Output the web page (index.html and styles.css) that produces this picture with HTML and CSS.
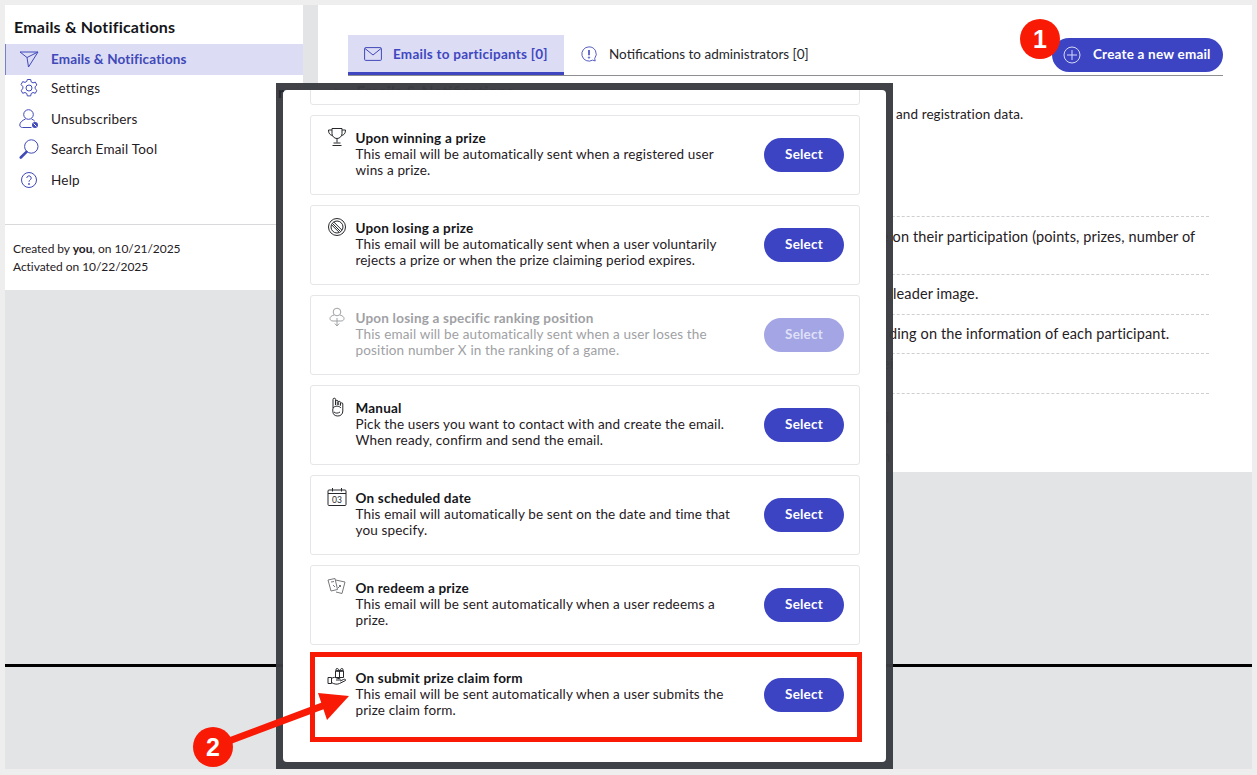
FILE: index.html
```html
<!DOCTYPE html>
<html lang="en">
<head>
<meta charset="utf-8">
<title>Emails &amp; Notifications</title>
<link rel="stylesheet" href="styles.css">
</head>
<body>
<div class="shell">
  <div class="top">
    <aside class="sidebar">
      <h2 class="side-title">Emails &amp; Notifications</h2>
      <nav class="nav">
        <a class="nav-item active"><svg class="nav-icon" viewBox="0 0 20 20"><path d="M1 3L19 3L9.500 18L8 8.500zM8 8.500L19 3"/></svg>Emails &amp; Notifications</a>
        <a class="nav-item"><svg class="nav-icon" viewBox="0 0 20 20"><circle cx="10" cy="10" r="3"/><path d="M8.300 1.500h3.400l.5 2.400 1.800 1 2.300-.8 1.600 2.900-1.800 1.700v2l1.800 1.700-1.600 2.900-2.300-.8-1.800 1-.5 2.400H8.300l-.5-2.400-1.800-1-2.300.8-1.600-2.900 1.800-1.700v-2L2.100 6.500l1.600-2.900 2.300.8 1.800-1z" stroke-linejoin="round"/></svg>Settings</a>
        <a class="nav-item"><svg class="nav-icon" viewBox="0 0 20 20"><circle cx="9.500" cy="5.500" r="4.800"/><path d="M6.500 10C3 11.500 .8 13.500 .8 16c0 1.500 1 2.500 2.700 2.500h9M12.500 10c1.500.6 2.500 1.300 3.300 2.300"/><circle cx="16" cy="16" r="3" fill="#4049b8" stroke="none"/><path d="M14.600 14.600l2.800 2.800" stroke="#fff"/></svg>Unsubscribers</a>
        <a class="nav-item"><svg class="nav-icon" viewBox="0 0 20 20"><circle cx="12.300" cy="7.500" r="6.700"/><path d="M7.500 12.800L1.800 18.500" stroke-width="2.600" stroke-linecap="round"/></svg>Search Email Tool</a>
        <a class="nav-item"><svg class="nav-icon" viewBox="0 0 20 20"><circle cx="10" cy="10" r="7.500"/><path d="M7.800 8a2.200 2.200 0 1 1 3.400 1.900c-.8.500-1.200 1-1.200 1.900"/><circle cx="10" cy="14" r=".6"/></svg>Help</a>
      </nav>
      <div class="side-foot">
        <p>Created by <b>you</b>, on 10/21/2025</p>
        <p>Activated on 10/22/2025</p>
      </div>
    </aside>
    <main class="main">
      <div class="tabs">
        <a class="tab tab-on"><svg class="tab-icon" viewBox="0 0 18 14"><rect x=".6" y=".6" width="16.800" height="12.800" rx="1"/><path d="M1 1.500L9 8l8-6.500"/></svg>Emails to participants [0]</a>
        <a class="tab"><svg class="tab-icon" viewBox="0 0 18 18"><path d="M9 1a8 8 0 1 0 4 14.900l3 .9-.6-2.800A8 8 0 0 0 9 1z"/><path d="M9 4.500v6" stroke-width="1.800"/><circle cx="9" cy="13" r=".8"/></svg>Notifications to administrators [0]</a>
        <button class="create"><svg class="create-icon" viewBox="0 0 18 18"><circle cx="9" cy="9" r="8"/><path d="M9 4v10M4 9h10"/></svg>Create a new email</button>
      </div>
      <h1 class="crumb-title"><span class="crumb-sep">&gt;</span>Emails &amp; Notifications</h1>
      <p class="lead">and registration data.</p>
      <div class="rows">
        <div class="row row-one">e on their participation (points, prizes, number of</div>
        <div class="row row-two">leader image.</div>
        <div class="row row-three">ding on the information of each participant.</div>
        <div class="row row-four">ei</div>
        <div class="row row-five">i</div>
        <div class="row-six">n</div>
      </div>
    </main>
  </div>
  <div class="rule"></div>
</div>

<div class="modal">
  <div class="modal-body">
  <div class="list">
    <div class="card"></div>
    <div class="card">
      <svg class="card-icon" viewBox="0 0 20 20"><path d="M5 1.500h10v5a5 5 0 0 1-10 0zM5 3H1.500c0 3.500 1.500 5 4 5.500M15 3h3.500c0 3.500-1.500 5-4 5.500M10 11.500v4M6.500 16h7M5.500 18.500h9"/></svg>
      <div class="card-text"><h3>Upon winning a prize</h3><p>This email will be automatically sent when a registered user<br>wins a prize.</p></div>
      <button class="select">Select</button>
    </div>
    <div class="card">
      <svg class="card-icon" viewBox="0 0 20 20"><circle cx="10" cy="10" r="8.500"/><circle cx="10" cy="10" r="6"/><path d="M5.500 6.500l8 8M6.800 5l8.200 8.200M4.800 8l7.200 7.200"/></svg>
      <div class="card-text"><h3>Upon losing a prize</h3><p>This email will be automatically sent when a user voluntarily<br>rejects a prize or when the prize claiming period expires.</p></div>
      <button class="select">Select</button>
    </div>
    <div class="card card-off">
      <svg class="card-icon" viewBox="0 0 20 20"><circle cx="10" cy="5" r="3.800"/><path d="M7 8C4 9 3 10 3 11.500S4 14 6 14h8c2 0 3-1 3-2.500S16 9 13 8M10 11v8M7.800 16.500L10 19l2.200-2.500"/></svg>
      <div class="card-text"><h3>Upon losing a specific ranking position</h3><p>This email will be automatically sent when a user loses the<br>position number X in the ranking of a game.</p></div>
      <button class="select select-off">Select</button>
    </div>
    <div class="card">
      <svg class="card-icon" viewBox="0 0 20 20"><path d="M6 12V2.500a1.300 1.300 0 0 1 2.600 0V8M8.600 8V4.500a1.200 1.200 0 0 1 2.400 0V8M11 8V5.500a1.200 1.200 0 0 1 2.400 0V8.500M13.400 8.500V7a1.200 1.200 0 0 1 2.400 0v7c0 3-2 5-5 5s-5-1.500-5-5V12M6 11c2-2.500 6-2.500 8 0M7 15c1.500 1.500 4 1.500 6 0"/></svg>
      <div class="card-text"><h3>Manual</h3><p>Pick the users you want to contact with and create the email.<br>When ready, confirm and send the email.</p></div>
      <button class="select">Select</button>
    </div>
    <div class="card">
      <svg class="card-icon" viewBox="0 0 20 20"><rect x="1" y="3" width="18" height="15.500" rx="1"/><path d="M1 6.500h18M5.500 1v3.500M14.500 1v3.500"/><text x="10" y="15.800" class="cal-num">03</text></svg>
      <div class="card-text"><h3>On scheduled date</h3><p>This email will automatically be sent on the date and time that<br>you specify.</p></div>
      <button class="select">Select</button>
    </div>
    <div class="card">
      <svg class="card-icon card-icon-light" viewBox="0 0 20 20"><path d="M1 3l7-1.500 2.500 11-6.500 1.500zM8.500 3l9.500 2-3 11.500-6-1.500M4 5l3-.5M6 8l2 2M12 8l2 2M11 11l3-3"/></svg>
      <div class="card-text"><h3>On redeem a prize</h3><p>This email will be sent automatically when a user redeems a<br>prize.</p></div>
      <button class="select">Select</button>
    </div>
    <div class="card card-last">
      <svg class="card-icon" viewBox="0 0 20 20"><path d="M1 10.500h3.500v6H1zM4.500 11.500c2-1.500 4-1.500 6 0h2c1 0 1 1.500 0 1.500H9M4.500 15.500c3 2 6 2 8 1l6-3c.5-1.500-1-1.500-2-1l-3.500 1.500M8.500 4h8v6.500h-8zM8 4h9M12.500 4v6.500M12.500 4c-1-3-3.500-3-3.500-1.500 0 1 1.500 1.500 3.500 1.500 2 0 3.500-.5 3.500-1.500C16 1 13.500 1 12.500 4z"/></svg>
      <div class="card-text"><h3>On submit prize claim form</h3><p>This email will be sent automatically when a user submits the<br>prize claim form.</p></div>
      <button class="select">Select</button>
    </div>
  </div>
  </div>
</div>

<div class="redbox"></div>
<svg class="arrow" viewBox="0 0 1257 775"><path d="M213 747L325 705" stroke="#f91a06" stroke-width="7"/><path d="M349 696L318 693L327 720z" fill="#f91a06"/></svg>
<div class="badge badge-one">1</div>
<div class="badge badge-two">2</div>
<span class="ghost ghost-left">r</span>
</body>
</html>
```
FILE: styles.css
```css
* { box-sizing: border-box; }
html, body { margin: 0; height: 100%; }
body {
  background: #eeeeee;
  padding: 5px 5px 6px;
  font-family: Lato, "Open Sans", sans-serif;
  font-size: 13px;
  color: #1f2024;
  overflow: hidden;
  position: relative;
}
p, h1, h2, h3 { margin: 0; }
.shell { height: 764px; background: #e3e4e6; display: flex; flex-direction: column; }
.top { height: 659px; display: flex; gap: 15px; align-items: flex-start; }
.rule { height: 3px; background: #000; }

.sidebar { width: 298px; height: 285px; background: #fff; display: flex; flex-direction: column; }
.side-title { font-size: 16px; letter-spacing: .2px; font-weight: 700; line-height: 20px; padding: 12px 9px 7px; color: #15161a; flex: none; }
.nav { display: flex; flex-direction: column; height: 181px; flex: none; border-bottom: 1px solid #d9d9dc; }
.nav-item { display: flex; align-items: center; gap: 12px; height: 30.800px; padding: 0 0 1px 14px; font-size: 13.500px; letter-spacing: .2px; flex: none; }
.nav-item.active { background: #dcdcf5; color: #4049b8; font-weight: 700; border-left: 1px solid #7a80c8; padding-left: 13px; letter-spacing: .15px; height: 31px; margin-bottom: -2px; }
.nav-icon { width: 20px; height: 20px; fill: none; stroke: #4049b8; stroke-width: 1; flex: none; }
.side-foot { padding: 15px 8px 0; font-size: 12px; line-height: 18px; letter-spacing: -.05px; }

.main { width: 934px; height: 467px; background: #fff; position: relative; padding: 30px 29px 0 30px; }
.tabs { display: flex; align-items: flex-end; height: 41px; border-bottom: 1px solid #8e8e92; }
.tab { display: flex; align-items: center; height: 40px; padding: 0 16px 2px; gap: 11px; font-size: 13.500px; color: #26272b; }
.tab-on { background: #dcdcf5; border-bottom: 3px solid #3f47c0; color: #3f47c0; font-weight: 700; width: 216px; padding-top: 1px; padding-bottom: 0; letter-spacing: .25px; }
.tab-icon { width: 18px; height: 16px; fill: none; stroke: #4049b8; stroke-width: 1; }
.create {
  margin-left: auto; margin-bottom: 3px; width: 171px; height: 34px; border: 0; border-radius: 17px;
  background: #3c44c4; color: #fff; font: 700 13.500px Lato, sans-serif; letter-spacing: .2px;
  display: flex; align-items: center; gap: 12px; padding: 0 0 2px 11px;
}
.create-icon { width: 18px; height: 18px; fill: none; stroke: #d6d8f6; stroke-width: 1; margin-top: 2px; }
.crumb-title { font-size: 16px; line-height: 20px; margin: 5px 0 0 -15px; }
.crumb-sep { margin-right: 14px; font-weight: 400; }
.lead { line-height: 18px; padding-left: 548px; margin-top: 4px; font-size: 13.500px; letter-spacing: .1px; white-space: nowrap; }
.rows { margin-top: 93px; margin-right: 14px; }
.row { border-top: 1px dashed #cfcfd2; font-size: 14.500px; letter-spacing: .12px; line-height: 20px; white-space: nowrap; }
.row-one { height: 58px; padding: 10px 0 0 533px; }
.row-two { height: 40px; padding: 9px 0 0 545px; }
.row-three { height: 39px; padding: 9px 0 0 541px; }
.row-four { height: 40px; padding: 0 0 0 534px; }
.row-five { height: 40px; padding: 14px 0 0 538px; }
.row-six { font-size: 14.500px; line-height: 20px; padding: 14px 0 0 534px; }

.modal {
  position: absolute; left: 276px; top: 83px; width: 617px; height: 686px; padding: 7px;
  background: rgba(58, 60, 65, .97);
}
.modal-body { height: 100%; background: #fff; border-radius: 4px; overflow: hidden; }
.list { display: flex; flex-direction: column; gap: 10px; padding: 0 26px 0 27px; margin-top: -65px; }
.card {
  height: 80px; flex: none; border: 1px solid #e6e6e8; border-radius: 3px;
  display: flex; align-items: flex-start; padding: 14px 15px 0 16px;
}
.card-last { height: 84px; }
.card-icon { width: 20px; height: 20px; flex: none; margin-top: -3px; fill: none; stroke: #27282c; stroke-width: 1; }
.card-icon-light { stroke: #77787c; }
.cal-num { font: 8.500px Lato, sans-serif; fill: #27282c; stroke: none; text-anchor: middle; }
.card-text { margin-left: 8.500px; line-height: 16px; font-size: 13.500px; letter-spacing: .15px; white-space: nowrap; flex: 1; }
.card-text h3 { font-size: 13.500px; font-weight: 700; letter-spacing: .2px; line-height: 16px; color: #15161a; }
.select {
  width: 80px; height: 34px; margin-top: 8px; border: 0; border-radius: 17px; flex: none; padding: 0 0 2px;
  background: #3c44c4; color: #fff; font: 700 13.500px Lato, sans-serif; letter-spacing: .2px;
}
.card-off .card-text, .card-off h3 { color: #a0a1a4; }
.card-off .card-icon { stroke: #a0a1a4; }
.select-off { background: #a3a5e4; color: #dfe0f7; }

.redbox { position: absolute; left: 310px; top: 652px; width: 552px; height: 90px; border: 5px solid #f91a06; }
.arrow { position: absolute; left: 0; top: 0; width: 1257px; height: 775px; fill: none; pointer-events: none; }
.badge {
  position: absolute; width: 40px; height: 40px; border-radius: 50%; background: #f91a06; color: #fff;
  font: 700 25px/40px "Liberation Sans", sans-serif; text-align: center;
}
.badge-one { left: 1020px; top: 19px; }
.badge-two { left: 193px; top: 727px; }
.ghost { position: absolute; font-weight: 700; font-size: 16px; line-height: 16px; }
.ghost-left { left: 278px; top: 84px; color: #26272d; }
```
